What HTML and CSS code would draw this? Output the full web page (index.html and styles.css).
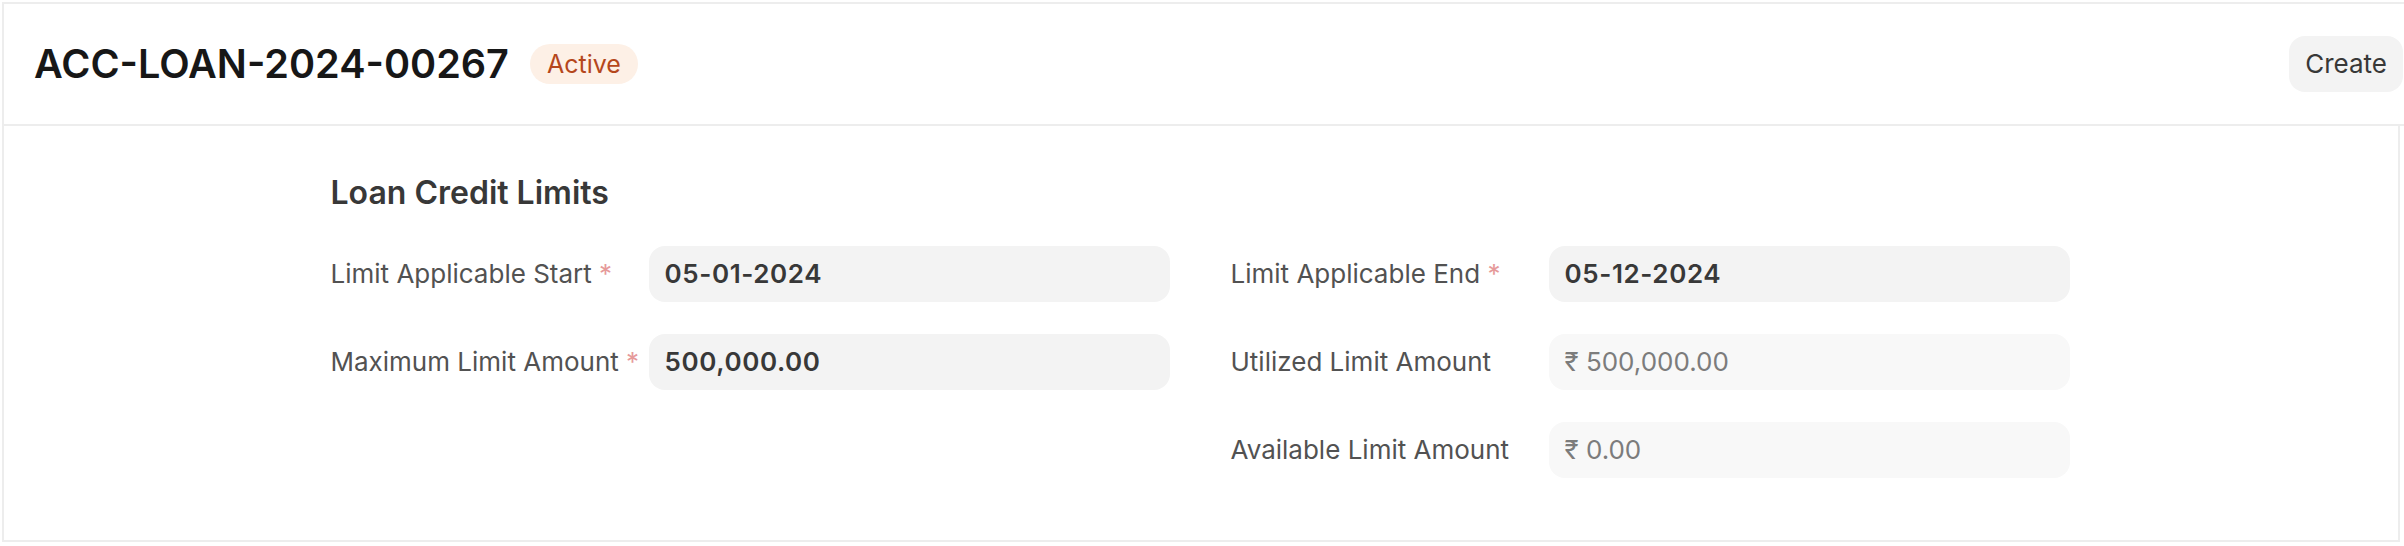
FILE: index.html
```html
<!DOCTYPE html>
<html lang="en">
<head>
<meta charset="utf-8">
<title>ACC-LOAN-2024-00267</title>
<link rel="stylesheet" href="styles.css">
</head>
<body>
<div class="page">
  <header class="page-head">
    <div class="title-wrap">
      <h1 class="title">ACC-LOAN-2024-00267</h1>
      <span class="badge">Active</span>
    </div>
    <button class="btn">Create</button>
  </header>
  <main class="page-body">
    <section class="section">
      <h2 class="section-title">Loan Credit Limits</h2>
      <div class="columns">
        <div class="column">
          <div class="field">
            <label class="label">Limit Applicable Start <span class="req">*</span></label>
            <div class="control"><span class="value strong">05-01-2024</span></div>
          </div>
          <div class="field">
            <label class="label">Maximum Limit Amount <span class="req">*</span></label>
            <div class="control"><span class="value strong">500,000.00</span></div>
          </div>
        </div>
        <div class="column">
          <div class="field">
            <label class="label">Limit Applicable End <span class="req">*</span></label>
            <div class="control"><span class="value strong">05-12-2024</span></div>
          </div>
          <div class="field">
            <label class="label">Utilized Limit Amount</label>
            <div class="control readonly"><span class="value muted">₹ 500,000.00</span></div>
          </div>
          <div class="field">
            <label class="label">Available Limit Amount</label>
            <div class="control readonly"><span class="value muted">₹ 0.00</span></div>
          </div>
        </div>
      </div>
    </section>
  </main>
</div>
</body>
</html>
```
FILE: styles.css
```css
* { box-sizing: border-box; }
html, body { margin: 0; padding: 0; background: #ffffff; }
body {
  font-family: Inter, "Noto Sans", "Liberation Sans", sans-serif;
  overflow: hidden;
  width: 2404px;
  height: 546px;
}
.page {
  padding-top: 2px;
  padding-left: 2px;
}
.page-head {
  display: flex;
  align-items: center;
  justify-content: space-between;
  height: 124px;
  border-top: 2px solid #ededed;
  border-left: 2px solid #ededed;
  border-bottom: 2px solid #ededed;
  padding: 0 1px 0 30px;
}
.title-wrap {
  display: flex;
  align-items: center;
  gap: 21px;
}
.title {
  margin: 0;
  font-size: 39.6px;
  font-weight: 600;
  line-height: 48px;
  color: #171717;
}
.badge {
  display: inline-flex;
  align-items: center;
  height: 40px;
  padding: 0 17px;
  border-radius: 20px;
  background: #fdf0e6;
  color: #b5471c;
  font-size: 25px;
  line-height: 40px;
}
.btn {
  font-family: inherit;
  height: 56px;
  padding: 0 16px;
  border: none;
  border-radius: 16px;
  background: #f3f3f3;
  color: #383838;
  font-size: 26px;
  line-height: 56px;
}
.page-body {
  height: 416px;
  border-left: 2px solid #ededed;
  border-right: 2px solid #ededed;
  border-bottom: 2px solid #ededed;
  margin-right: 4px;
  padding-top: 47px;
}
.section {
  width: 1739px;
  margin: 0 auto;
  position: relative;
  left: -1px;
}
.section-title {
  margin: 0 0 33px 0;
  font-size: 32px;
  line-height: 40px;
  font-weight: 600;
  color: #383838;
}
.columns {
  display: grid;
  grid-template-columns: 1fr 1fr;
  column-gap: 61px;
}
.column {
  display: flex;
  flex-direction: column;
  gap: 32px;
}
.field {
  display: grid;
  grid-template-columns: 318px 1fr;
  align-items: center;
}
.label {
  font-size: 26px;
  line-height: 32px;
  color: #525252;
}
.req { color: #e69a9a; }
.control {
  height: 56px;
  border-radius: 16px;
  background: #f3f3f3;
  display: flex;
  align-items: center;
  padding: 0 16px;
}
.control.readonly { background: #f8f8f8; }
.value { font-size: 26px; line-height: 32px; }
.value.strong { font-weight: 600; color: #383838; letter-spacing: 0.6px; }
.value.muted { color: #7c7c7c; }
```
